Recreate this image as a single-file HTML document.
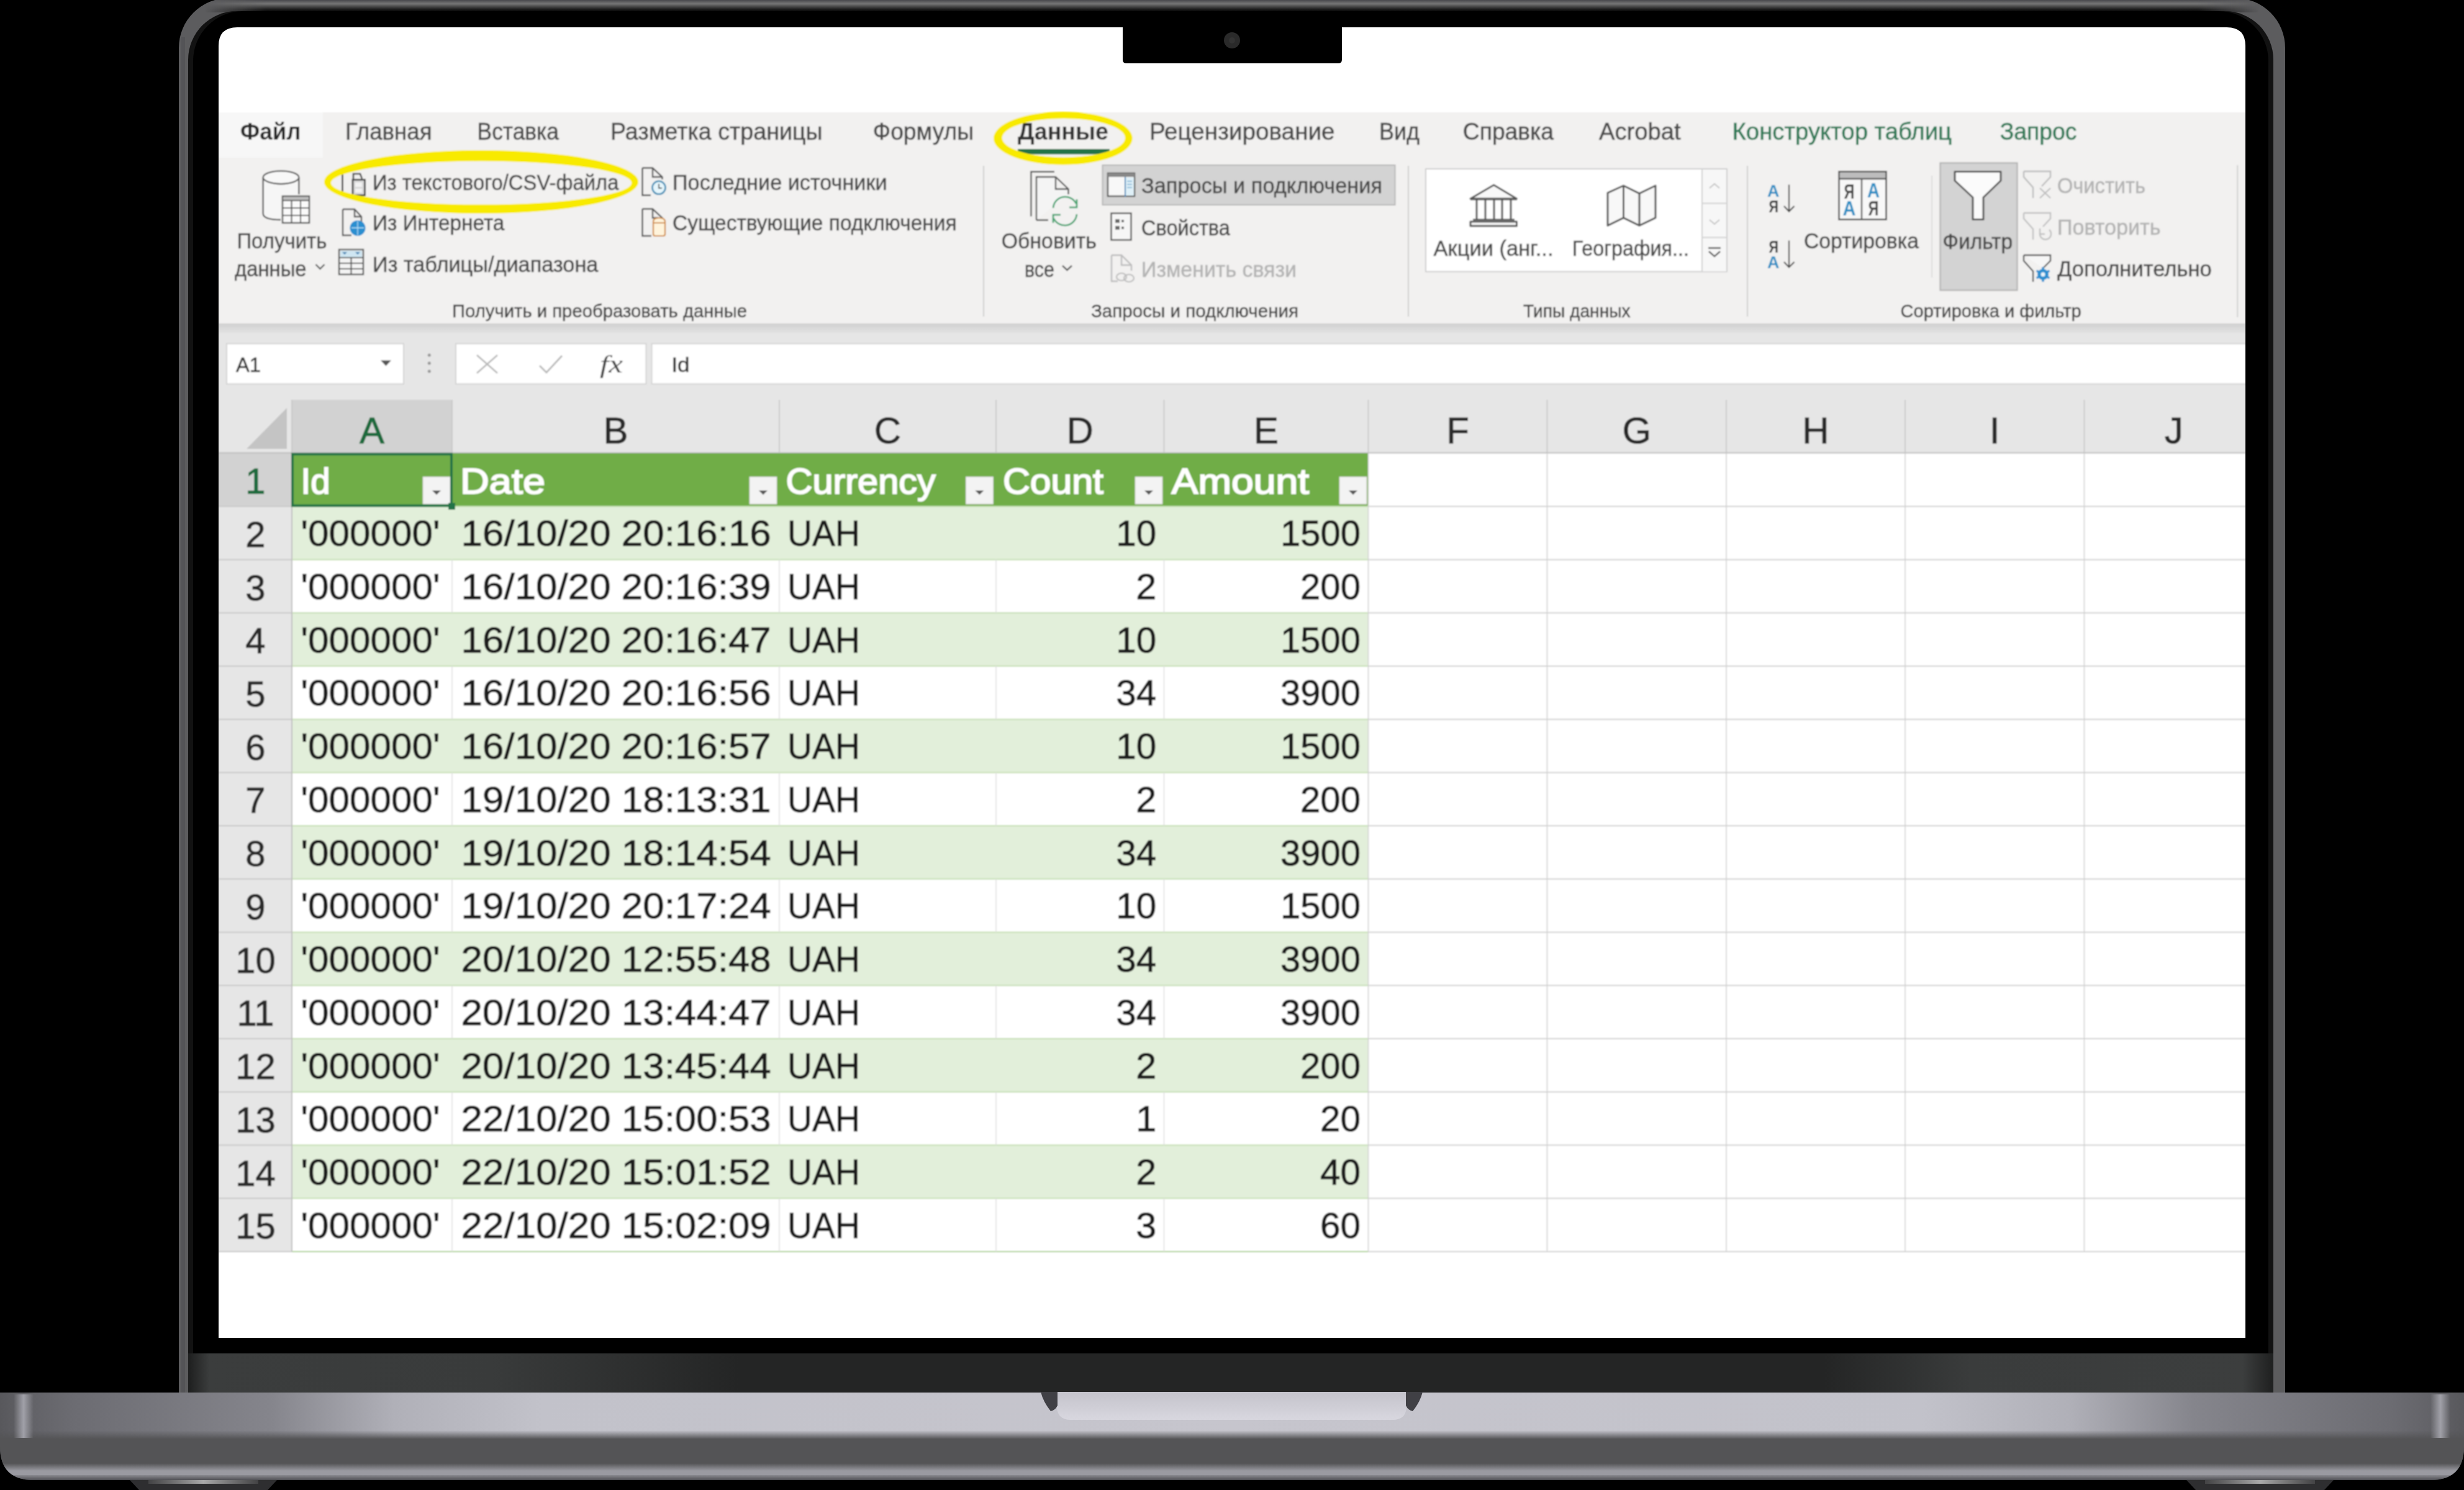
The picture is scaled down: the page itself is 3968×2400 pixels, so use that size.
<!DOCTYPE html>
<html><head><meta charset="utf-8"><title>Excel</title>
<style>
html,body{margin:0;padding:0;background:#000;width:3968px;height:2400px;overflow:hidden}
svg{display:block;font-family:"Liberation Sans", sans-serif}
</style></head><body>
<svg width="3968" height="2400" viewBox="0 0 3968 2400">
<defs>
<linearGradient id="baseH" x1="0" x2="3968" y1="0" y2="0" gradientUnits="userSpaceOnUse">
<stop offset="0" stop-color="#58585c"/><stop offset="0.012" stop-color="#626267"/><stop offset="0.03" stop-color="#6c6c72"/>
<stop offset="0.11" stop-color="#85858c"/><stop offset="0.16" stop-color="#b0b0b8"/><stop offset="0.22" stop-color="#c2c2ca"/>
<stop offset="0.5" stop-color="#c6c5cd"/>
<stop offset="0.78" stop-color="#c2c2ca"/><stop offset="0.84" stop-color="#b0b0b8"/><stop offset="0.89" stop-color="#85858c"/>
<stop offset="0.97" stop-color="#6c6c72"/><stop offset="0.988" stop-color="#626267"/><stop offset="1" stop-color="#58585c"/>
</linearGradient>
<linearGradient id="bandTop" x1="0" x2="0" y1="0" y2="1"><stop offset="0" stop-color="#545456" stop-opacity="0"/><stop offset="1" stop-color="#545456"/></linearGradient>
<linearGradient id="bandMid" x1="0" x2="0" y1="0" y2="1"><stop offset="0" stop-color="#545456"/><stop offset="1" stop-color="#9a9aa1"/></linearGradient>
<linearGradient id="bandBot" x1="0" x2="0" y1="0" y2="1"><stop offset="0" stop-color="#8a8a90"/><stop offset="1" stop-color="#505055"/></linearGradient>
<linearGradient id="hl" x1="0" x2="1" y1="0" y2="0"><stop offset="0" stop-color="#a8a8b0" stop-opacity="0"/><stop offset="0.5" stop-color="#a8a8b0" stop-opacity="0.9"/><stop offset="1" stop-color="#a8a8b0" stop-opacity="0"/></linearGradient>
<linearGradient id="footHL" x1="0" x2="1" y1="0" y2="0"><stop offset="0" stop-color="#999" stop-opacity="0.2"/><stop offset="0.5" stop-color="#aaa"/><stop offset="1" stop-color="#999" stop-opacity="0.2"/></linearGradient>
<linearGradient id="hinge" x1="0" x2="3968" y1="0" y2="0" gradientUnits="userSpaceOnUse">
<stop offset="0.077" stop-color="#202121"/><stop offset="0.085" stop-color="#3b3d3d"/><stop offset="0.2" stop-color="#393b3b"/><stop offset="0.3" stop-color="#242525"/><stop offset="0.74" stop-color="#242525"/>
<stop offset="0.8" stop-color="#3a3c3c"/><stop offset="0.91" stop-color="#3c3e3e"/><stop offset="0.922" stop-color="#202121"/>
</linearGradient>
<linearGradient id="lidG" x1="0" x2="0" y1="0" y2="20" gradientUnits="userSpaceOnUse"><stop offset="0" stop-color="#48484c"/><stop offset="0.3" stop-color="#767676"/><stop offset="0.6" stop-color="#3a3a3a"/><stop offset="0.8" stop-color="#151515"/><stop offset="1" stop-color="#000"/></linearGradient>
<linearGradient id="lidTop" x1="0" x2="0" y1="0" y2="1">
<stop offset="0" stop-color="#444"/><stop offset="0.004" stop-color="#707072"/><stop offset="0.008" stop-color="#2a2a2a"/><stop offset="1" stop-color="#2a2a2a"/>
</linearGradient>
<linearGradient id="notchG" x1="0" x2="0" y1="0" y2="1">
<stop offset="0" stop-color="#c4c3cb"/><stop offset="1" stop-color="#d8d7df"/>
</linearGradient>
<linearGradient id="shadowR" x1="0" x2="0" y1="0" y2="1">
<stop offset="0" stop-color="#d0d0d0"/><stop offset="1" stop-color="#e6e6e6"/>
</linearGradient>
</defs>
<rect x="0.0" y="0.0" width="3968.0" height="2400.0" fill="#000" />
<path d="M288 2250 L288 77 A80 80 0 0 1 368 -3 L3600 -3 A80 80 0 0 1 3680 77 L3680 2250 Z" fill="#5c5c5e" />
<clipPath id="lidClip"><path d="M288 2250 L288 77 A80 80 0 0 1 368 -3 L3600 -3 A80 80 0 0 1 3680 77 L3680 2250 Z"/></clipPath>
<linearGradient id="fadeH" x1="330" x2="3638" y1="0" y2="0" gradientUnits="userSpaceOnUse"><stop offset="0" stop-color="#fff" stop-opacity="0"/><stop offset="0.03" stop-color="#fff" stop-opacity="1"/><stop offset="0.97" stop-color="#fff" stop-opacity="1"/><stop offset="1" stop-color="#fff" stop-opacity="0"/></linearGradient>
<mask id="fadeMask" maskUnits="userSpaceOnUse" x="0" y="-10" width="3968" height="40"><rect x="330" y="-10" width="3308" height="40" fill="url(#fadeH)"/></mask>
<rect x="288" y="-3" width="3392" height="23" fill="url(#lidG)" clip-path="url(#lidClip)" mask="url(#fadeMask)"/>
<rect x="292" y="60" width="6" height="2190" fill="#4e4e54" opacity="0.6"/>
<path d="M303 2250 L303 96 A78 78 0 0 1 381 18 L3583 18 A78 78 0 0 1 3661 96 L3661 2250 Z" fill="#121212" />
<path d="M311 2250 L311 98 A80 80 0 0 1 391 18 L3573 18 A80 80 0 0 1 3653 98 L3653 2250 Z" fill="#000" />
<rect x="303.0" y="2180.0" width="3358.0" height="63.0" fill="url(#hinge)" />
<path d="M352 2155 L352 74 Q352 44 382 44 L3586 44 Q3616 44 3616 74 L3616 2155 Z" fill="#ffffff"/>
<path d="M0 2243 L3968 2243 L3968 2330 Q3968 2384 3914 2384 L54 2384 Q0 2384 0 2330 Z" fill="url(#baseH)"/>
<clipPath id="baseClip"><path d="M0 2243 L3968 2243 L3968 2330 Q3968 2384 3914 2384 L54 2384 Q0 2384 0 2330 Z"/></clipPath>
<g clip-path="url(#baseClip)">
<rect x="0" y="2304" width="3968" height="14" fill="url(#bandTop)"/>
<rect x="0.0" y="2318.0" width="3968.0" height="40.0" fill="#545456" />
<rect x="0" y="2357" width="3968" height="12" fill="url(#bandMid)"/>
<rect x="0.0" y="2369.0" width="3968.0" height="7.0" fill="#9a9aa1" />
<rect x="0" y="2376" width="3968" height="8" fill="url(#bandBot)"/>
<rect x="22" y="2246" width="32" height="70" fill="url(#hl)"/>
<rect x="3914" y="2246" width="32" height="70" fill="url(#hl)"/>
</g>
<path d="M1702 2242 L2265 2242 L2265 2268 Q2263 2287 2243 2287 L1724 2287 Q1704 2287 1702 2268 Z" fill="url(#notchG)"/>
<path d="M1676 2242 L1703 2242 L1703 2264 Q1699 2272 1692 2273 Q1680 2258 1676 2242 Z" fill="#404045"/>
<path d="M2291 2242 L2264 2242 L2264 2264 Q2268 2272 2275 2273 Q2287 2258 2291 2242 Z" fill="#404045"/>
<path d="M209 2384 L446 2384 L431 2400 L224 2400 Z" fill="#2e2e30"/>
<rect x="239" y="2384" width="177" height="6" fill="url(#footHL)"/>
<path d="M3521 2384 L3758 2384 L3743 2400 L3536 2400 Z" fill="#2e2e30"/>
<rect x="3551" y="2384" width="177" height="6" fill="url(#footHL)"/>
<clipPath id="scr"><path d="M352 2155 L352 74 Q352 44 382 44 L3586 44 Q3616 44 3616 74 L3616 2155 Z"/></clipPath>
<filter id="soft" x="0" y="0" width="1" height="1" filterUnits="objectBoundingBox"><feGaussianBlur stdDeviation="0.9"/></filter>
<g clip-path="url(#scr)"><g filter="url(#soft)">
<rect x="352.0" y="181.0" width="3264.0" height="341.0" fill="#f2f1f0" />
<rect x="352.0" y="181.0" width="168.0" height="73.0" fill="#f7f7f7" />
<rect x="352" y="521" width="3264" height="18" fill="url(#shadowR)"/>
<rect x="352.0" y="537.0" width="3264.0" height="193.0" fill="#e6e6e6" />
<text x="387.0" y="225.0" font-size="38" fill="#262626" font-weight="bold" textLength="97.5" lengthAdjust="spacingAndGlyphs" >Файл</text>
<text x="556.0" y="225.0" font-size="38" fill="#4a4a4a" textLength="139.5" lengthAdjust="spacingAndGlyphs" stroke="#4a4a4a" stroke-width="0.61" >Главная</text>
<text x="768.6" y="225.0" font-size="38" fill="#4a4a4a" textLength="131.4" lengthAdjust="spacingAndGlyphs" stroke="#4a4a4a" stroke-width="0.61" >Вставка</text>
<text x="983.0" y="225.0" font-size="38" fill="#4a4a4a" textLength="341.7" lengthAdjust="spacingAndGlyphs" stroke="#4a4a4a" stroke-width="0.61" >Разметка страницы</text>
<text x="1405.8" y="225.0" font-size="38" fill="#4a4a4a" textLength="162.2" lengthAdjust="spacingAndGlyphs" stroke="#4a4a4a" stroke-width="0.61" >Формулы</text>
<text x="1639.0" y="225.0" font-size="38" fill="#333" font-weight="bold" textLength="146.0" lengthAdjust="spacingAndGlyphs" >Данные</text>
<text x="1851.0" y="225.0" font-size="38" fill="#4a4a4a" textLength="298.6" lengthAdjust="spacingAndGlyphs" stroke="#4a4a4a" stroke-width="0.61" >Рецензирование</text>
<text x="2221.0" y="225.0" font-size="38" fill="#4a4a4a" textLength="65.0" lengthAdjust="spacingAndGlyphs" stroke="#4a4a4a" stroke-width="0.61" >Вид</text>
<text x="2355.8" y="225.0" font-size="38" fill="#4a4a4a" textLength="146.2" lengthAdjust="spacingAndGlyphs" stroke="#4a4a4a" stroke-width="0.61" >Справка</text>
<text x="2575.0" y="225.0" font-size="38" fill="#4a4a4a" textLength="131.7" lengthAdjust="spacingAndGlyphs" stroke="#4a4a4a" stroke-width="0.61" >Acrobat</text>
<text x="2789.5" y="225.0" font-size="38" fill="#2e7a57" textLength="353.5" lengthAdjust="spacingAndGlyphs" stroke="#2e7a57" stroke-width="0.61" >Конструктор таблиц</text>
<text x="3220.8" y="225.0" font-size="38" fill="#2e7a57" textLength="123.7" lengthAdjust="spacingAndGlyphs" stroke="#2e7a57" stroke-width="0.61" >Запрос</text>
<rect x="1639.0" y="240.0" width="148.0" height="8.5" fill="#217346" />
<path d="M423.7 286 L423.7 344 Q423.7 354 452 354 L452 315 L481.3 315 L481.3 286 Z" fill="#f6f6f6"/>
<g fill="none" stroke="#555" stroke-width="2.4"><path d="M423.7 286 L423.7 344 Q423.7 354 452 354"/><ellipse cx="452.5" cy="285.8" rx="28.8" ry="10.4" fill="#f8f8f8"/><path d="M481.3 286 L481.3 313"/></g>
<g stroke="#555" stroke-width="2.4" fill="#fafafa"><rect x="455" y="316" width="43" height="43"/></g>
<g stroke="#555" stroke-width="2"><rect x="455" y="316" width="43" height="7" fill="#bbb"/><line x1="469.5" y1="323" x2="469.5" y2="359"/><line x1="484" y1="323" x2="484" y2="359"/><line x1="455" y1="335" x2="498" y2="335"/><line x1="455" y1="347" x2="498" y2="347"/></g>
<text x="381.4" y="400.3" font-size="35" fill="#4a4a4a" textLength="145.0" lengthAdjust="spacingAndGlyphs" stroke="#4a4a4a" stroke-width="0.56" >Получить</text>
<text x="378.0" y="445.3" font-size="35" fill="#4a4a4a" textLength="115.5" lengthAdjust="spacingAndGlyphs" stroke="#4a4a4a" stroke-width="0.56" >данные</text>
<path d="M508.5 426 L515.5 433 L522.5 426" fill="none" stroke="#555" stroke-width="2.4"/>
<path d="M555 271 L551.5 271 L551.5 312 L556 312" fill="none" stroke="#444" stroke-width="2.6"/>
<rect x="568" y="289.5" width="19.5" height="25" fill="#d9d9d9" stroke="#444" stroke-width="2.8"/>
<path d="M569 288 L569 280 L580 280 L583 288" fill="none" stroke="#444" stroke-width="2.6"/>
<g fill="#f2f2f2"><rect x="572" y="294" width="11" height="7"/><rect x="572" y="304" width="11" height="6"/></g>
<text x="600.0" y="305.6" font-size="35" fill="#4a4a4a" textLength="396.5" lengthAdjust="spacingAndGlyphs" stroke="#4a4a4a" stroke-width="0.56" >Из текстового/CSV-файла</text>
<path d="M552 337 L571 337 L582 349 L582 358 M552 337 L552 379 L566 379" fill="none" stroke="#555" stroke-width="2.4"/>
<path d="M571 337 L571 349 L582 349" fill="none" stroke="#555" stroke-width="2.4"/>
<circle cx="576" cy="367.4" r="12.5" fill="#2c8fd0"/>
<path d="M576 356 L576 379 M566 367 L586 367" stroke="#bfe3f7" stroke-width="1.3"/>
<text x="600.0" y="371.0" font-size="35" fill="#4a4a4a" textLength="212.4" lengthAdjust="spacingAndGlyphs" stroke="#4a4a4a" stroke-width="0.56" >Из Интернета</text>
<g fill="#f4f4f4" stroke="#555" stroke-width="2.4"><rect x="546" y="402" width="39" height="40"/></g>
<rect x="548" y="404" width="35" height="10" fill="#cfe6f2"/>
<g stroke="#555" stroke-width="2"><line x1="546" y1="415" x2="585" y2="415"/><line x1="546" y1="424" x2="585" y2="424"/><line x1="546" y1="433" x2="585" y2="433"/><line x1="565.5" y1="415" x2="565.5" y2="442"/></g>
<path d="M551 406 L555 410 L559 406 Z M572 406 L576 410 L580 406 Z" fill="#3a7fb0"/>
<text x="600.0" y="437.6" font-size="35" fill="#4a4a4a" textLength="363.4" lengthAdjust="spacingAndGlyphs" stroke="#4a4a4a" stroke-width="0.56" >Из таблицы/диапазона</text>
<path d="M1034.5 270.5 L1051 270.5 L1066.5 285 L1066.5 289 M1034.5 270.5 L1034.5 314.5 L1048 314.5 M1051 270.5 L1051 285 L1066.5 285" fill="none" stroke="#555" stroke-width="2.4"/>
<circle cx="1061" cy="302.3" r="10.5" fill="#e6f6fc" stroke="#3c8db5" stroke-width="2.6"/>
<path d="M1061 296 L1061 303 L1066 303" fill="none" stroke="#444" stroke-width="1.8"/>
<text x="1083.0" y="306.0" font-size="35" fill="#4a4a4a" textLength="345.6" lengthAdjust="spacingAndGlyphs" stroke="#4a4a4a" stroke-width="0.56" >Последние источники</text>
<path d="M1034.5 336.5 L1051 336.5 L1066.5 351 L1066.5 352 M1034.5 336.5 L1034.5 380 L1049 380 M1051 336.5 L1051 351 L1060 351" fill="none" stroke="#555" stroke-width="2.4"/>
<path d="M1052 357 Q1052 351 1061.5 351 Q1071 351 1071 357 L1071 377 Q1071 380 1068 380 L1055 380 Q1052 380 1052 377 Z" fill="#fff4dc" stroke="#d08a3c" stroke-width="2.2"/>
<line x1="1052" y1="359" x2="1071" y2="359" stroke="#d08a3c" stroke-width="2"/>
<text x="1083.0" y="371.0" font-size="35" fill="#4a4a4a" textLength="457.6" lengthAdjust="spacingAndGlyphs" stroke="#4a4a4a" stroke-width="0.56" >Существующие подключения</text>
<text x="728.0" y="511.0" font-size="30" fill="#444" textLength="475.0" lengthAdjust="spacingAndGlyphs" stroke="#444" stroke-width="0.48" >Получить и преобразовать данные</text>
<rect x="1583.2" y="267.0" width="1.6" height="243.0" fill="#c8c8c8" />
<rect x="2267.2" y="267.0" width="1.6" height="243.0" fill="#c8c8c8" />
<rect x="2813.2" y="267.0" width="1.6" height="243.0" fill="#c8c8c8" />
<rect x="3110.5" y="283.0" width="1.4" height="164.0" fill="#d4d4d4" />
<rect x="3602.5" y="266.0" width="1.6" height="245.0" fill="#c8c8c8" />
<path d="M1660.4 348.6 L1660.4 276.8 L1698 276.8" fill="none" stroke="#555" stroke-width="2.4"/>
<path d="M1669 354.5 L1669 285 L1700 285 L1720.5 304.5 L1720.5 313 M1700 285 L1700 304.5 L1720.5 304.5 M1669 354.5 L1688 354.5" fill="#f4f4f4" stroke="#555" stroke-width="2.4"/>
<g fill="none" stroke="#3aa06a" stroke-width="2.6"><path d="M1696 335 A19.5 19.5 0 0 1 1733 328"/><path d="M1734 345 A19.5 19.5 0 0 1 1697 352"/></g>
<path d="M1734 321 L1734 334 L1722 334 M1696 359 L1696 346 L1708 346" fill="none" stroke="#3aa06a" stroke-width="2.6"/>
<text x="1612.8" y="400.3" font-size="35" fill="#4a4a4a" textLength="153.0" lengthAdjust="spacingAndGlyphs" stroke="#4a4a4a" stroke-width="0.56" >Обновить</text>
<text x="1650.0" y="446.0" font-size="35" fill="#4a4a4a" textLength="48.0" lengthAdjust="spacingAndGlyphs" stroke="#4a4a4a" stroke-width="0.56" >все</text>
<path d="M1711 428 L1718.5 435 L1726 428" fill="none" stroke="#555" stroke-width="2.4"/>
<rect x="1775.5" y="266" width="471" height="64" fill="#d3d3d3" stroke="#b8b8b8" stroke-width="2"/>
<rect x="1784" y="279" width="43" height="37" fill="#f8f8f8" stroke="#555" stroke-width="2.4"/>
<rect x="1784" y="279" width="43" height="6" fill="#888"/>
<rect x="1812" y="286" width="14" height="29" fill="#dff0f8"/>
<line x1="1812" y1="285" x2="1812" y2="317" stroke="#3a86b8" stroke-width="2"/>
<g stroke="#6aa6cc" stroke-width="1.4"><line x1="1815" y1="292" x2="1823" y2="292"/><line x1="1815" y1="297" x2="1823" y2="297"/><line x1="1815" y1="302" x2="1823" y2="302"/></g>
<text x="1838.0" y="311.0" font-size="35" fill="#4a4a4a" textLength="388.0" lengthAdjust="spacingAndGlyphs" stroke="#4a4a4a" stroke-width="0.56" >Запросы и подключения</text>
<rect x="1789.5" y="343.5" width="32" height="43" fill="#f6f6f6" stroke="#555" stroke-width="2.4"/>
<g fill="#666"><rect x="1796" y="353" width="7" height="6"/><rect x="1796" y="364" width="7" height="6"/><rect x="1806" y="354" width="4" height="4"/><rect x="1806" y="365" width="4" height="4"/></g>
<text x="1838.0" y="379.0" font-size="35" fill="#4a4a4a" textLength="142.8" lengthAdjust="spacingAndGlyphs" stroke="#4a4a4a" stroke-width="0.56" >Свойства</text>
<path d="M1790 411 L1806 411 L1822 427 L1822 436 M1790 411 L1790 453 L1800 453 M1806 411 L1806 427 L1822 427" fill="none" stroke="#bdbdbd" stroke-width="2.4"/>
<g fill="none" stroke="#bdbdbd" stroke-width="2.2"><ellipse cx="1806" cy="446" rx="8" ry="6"/><ellipse cx="1818" cy="448" rx="8" ry="6"/></g>
<text x="1838.0" y="446.0" font-size="35" fill="#b4b4b4" textLength="250.0" lengthAdjust="spacingAndGlyphs" stroke="#b4b4b4" stroke-width="0.56" >Изменить связи</text>
<text x="1757.0" y="511.0" font-size="30" fill="#444" textLength="334.0" lengthAdjust="spacingAndGlyphs" stroke="#444" stroke-width="0.48" >Запросы и подключения</text>
<rect x="2296" y="272" width="485" height="165.5" fill="#ffffff" stroke="#cfcfcf" stroke-width="2"/>
<rect x="2741" y="273" width="39" height="164" fill="#f7f7f7"/>
<g stroke="#d2d2d2" stroke-width="2"><line x1="2741" y1="272" x2="2741" y2="437"/><line x1="2741" y1="327.5" x2="2781" y2="327.5"/><line x1="2741" y1="382.4" x2="2781" y2="382.4"/></g>
<path d="M2753 303 L2761 296 L2769 303" fill="none" stroke="#c4c4c4" stroke-width="2"/>
<path d="M2753 354 L2761 361 L2769 354" fill="none" stroke="#c4c4c4" stroke-width="2"/>
<path d="M2751 399.5 L2771 399.5 M2752 405 L2761 413 L2770 405" fill="none" stroke="#555" stroke-width="2.4"/>
<g fill="#f8f8f8" stroke="#555" stroke-width="3" stroke-linejoin="round"><path d="M2368 320 L2405.6 298 L2442.5 320 Z"/><rect x="2368" y="357" width="74.5" height="7"/></g>
<g stroke="#555" stroke-width="3" fill="none"><line x1="2368" y1="321" x2="2443" y2="321"/><line x1="2372" y1="354" x2="2439" y2="354"/><line x1="2378" y1="321" x2="2378" y2="354"/><line x1="2392" y1="321" x2="2392" y2="354"/><line x1="2406" y1="321" x2="2406" y2="354"/><line x1="2419" y1="321" x2="2419" y2="354"/><line x1="2433" y1="321" x2="2433" y2="354"/></g>
<text x="2308.5" y="412.0" font-size="35" fill="#4a4a4a" textLength="193.0" lengthAdjust="spacingAndGlyphs" stroke="#4a4a4a" stroke-width="0.56" >Акции (анг...</text>
<path d="M2589 310.7 L2614.5 299 L2640 311.7 L2666 299 L2666 350.8 L2640 363.4 L2614.5 350.8 L2589 363.4 Z" fill="#f8f8f8" stroke="#555" stroke-width="3" stroke-linejoin="round"/>
<path d="M2614.5 299 L2614.5 350.8 M2640 311.7 L2640 363.4" stroke="#555" stroke-width="3"/>
<text x="2532.0" y="412.0" font-size="35" fill="#4a4a4a" textLength="188.0" lengthAdjust="spacingAndGlyphs" stroke="#4a4a4a" stroke-width="0.56" >География...</text>
<text x="2453.0" y="511.0" font-size="30" fill="#444" textLength="172.5" lengthAdjust="spacingAndGlyphs" stroke="#444" stroke-width="0.48" >Типы данных</text>
<text x="2846.0" y="316.5" font-size="28" fill="#2b8fc4" font-weight="bold" textLength="19.5" lengthAdjust="spacingAndGlyphs" >А</text>
<text x="2848.5" y="342.0" font-size="28" fill="#333" font-weight="bold" textLength="15.5" lengthAdjust="spacingAndGlyphs" >Я</text>
<path d="M2881 297.6 L2881 340 M2873 332 L2881 340.6 L2889.5 332" fill="none" stroke="#444" stroke-width="2.2"/>
<text x="2848.5" y="406.5" font-size="28" fill="#333" font-weight="bold" textLength="15.5" lengthAdjust="spacingAndGlyphs" >Я</text>
<text x="2846.0" y="432.0" font-size="28" fill="#2b8fc4" font-weight="bold" textLength="19.5" lengthAdjust="spacingAndGlyphs" >А</text>
<path d="M2881 387.5 L2881 430 M2873 422 L2881 430.5 L2889.5 422" fill="none" stroke="#444" stroke-width="2.2"/>
<rect x="2961.5" y="276.5" width="76" height="77" fill="#f8f8f8" stroke="#555" stroke-width="2.6"/>
<rect x="2963" y="278" width="73" height="9" fill="#bdbdbd"/>
<line x1="2961.5" y1="288" x2="3037.5" y2="288" stroke="#555" stroke-width="2.4"/>
<line x1="2998" y1="288" x2="2998" y2="353" stroke="#555" stroke-width="2.4"/>
<text x="2969.5" y="319.5" font-size="33" fill="#444" font-weight="bold" textLength="17.0" lengthAdjust="spacingAndGlyphs" >Я</text>
<text x="2967.5" y="346.5" font-size="33" fill="#2b8fc4" font-weight="bold" textLength="21.0" lengthAdjust="spacingAndGlyphs" >А</text>
<text x="3007.0" y="318.0" font-size="33" fill="#2b8fc4" font-weight="bold" textLength="20.0" lengthAdjust="spacingAndGlyphs" >А</text>
<text x="3008.5" y="346.5" font-size="33" fill="#444" font-weight="bold" textLength="17.0" lengthAdjust="spacingAndGlyphs" >Я</text>
<text x="2905.0" y="400.3" font-size="35" fill="#4a4a4a" textLength="185.0" lengthAdjust="spacingAndGlyphs" stroke="#4a4a4a" stroke-width="0.56" >Сортировка</text>
<rect x="3124.5" y="262.5" width="124" height="205" fill="#d3d3d3" stroke="#b4b4b4" stroke-width="2.2"/>
<path d="M3148 276.5 L3222 276.5 L3222 291 L3194 318 L3194 353.5 L3177 353.5 L3177 318 L3148 291 Z" fill="#fbfbfb" stroke="#555" stroke-width="3" stroke-linejoin="round"/>
<text x="3128.5" y="400.5" font-size="35" fill="#4a4a4a" textLength="112.5" lengthAdjust="spacingAndGlyphs" stroke="#4a4a4a" stroke-width="0.56" >Фильтр</text>
<path d="M3259 276 L3302 276 L3302 285 L3288 300 M3259 276 L3259 285 L3274 302 L3274 319" fill="none" stroke="#bdbdbd" stroke-width="2.4"/>
<path d="M3285 303 L3302 319 M3302 303 L3285 319" stroke="#bdbdbd" stroke-width="2.2"/>
<text x="3313.0" y="311.0" font-size="35" fill="#b4b4b4" textLength="142.0" lengthAdjust="spacingAndGlyphs" stroke="#b4b4b4" stroke-width="0.56" >Очистить</text>
<path d="M3259 343 L3302 343 L3302 352 L3290 365 M3259 343 L3259 352 L3274 369 L3274 386" fill="none" stroke="#c2c2c2" stroke-width="2.4"/>
<path d="M3300 370 A9 9 0 1 1 3285 377 M3285 368 L3285 377 L3293 377" fill="none" stroke="#c2c2c2" stroke-width="2.4"/>
<text x="3313.0" y="378.0" font-size="35" fill="#b4b4b4" textLength="166.5" lengthAdjust="spacingAndGlyphs" stroke="#b4b4b4" stroke-width="0.56" >Повторить</text>
<path d="M3259 411 L3302 411 L3302 420 L3290 432 M3259 411 L3259 420 L3274 437 L3274 454" fill="#f6f6f6" stroke="#555" stroke-width="2.4"/>
<circle cx="3290" cy="442" r="9" fill="#2b8fd0"/><circle cx="3290" cy="442" r="3.5" fill="#e8f4fb"/>
<g stroke="#2b8fd0" stroke-width="3.5"><line x1="3290" y1="430" x2="3290" y2="454"/><line x1="3279.6" y1="436" x2="3300.4" y2="448"/><line x1="3279.6" y1="448" x2="3300.4" y2="436"/></g>
<circle cx="3290" cy="442" r="3.5" fill="#e8f4fb"/>
<text x="3313.0" y="445.4" font-size="35" fill="#4a4a4a" textLength="248.7" lengthAdjust="spacingAndGlyphs" stroke="#4a4a4a" stroke-width="0.56" >Дополнительно</text>
<text x="3060.6" y="511.0" font-size="30" fill="#444" textLength="291.0" lengthAdjust="spacingAndGlyphs" stroke="#444" stroke-width="0.48" >Сортировка и фильтр</text>
<path d="M522 293 A253 51 0 1 0 1028 293 A253 51 0 1 0 522 293 Z M533 294.6 A242 35 0 1 0 1017 294.6 A242 35 0 1 0 533 294.6 Z" fill="#f8ea00" fill-rule="evenodd"/>
<path d="M1600.0 222.75 A111.85 42.75 0 1 0 1823.6999999999998 222.75 A111.85 42.75 0 1 0 1600.0 222.75 Z M1613.9 222.2 A99 31.2 0 1 0 1811.9 222.2 A99 31.2 0 1 0 1613.9 222.2 Z" fill="#f8ea00" fill-rule="evenodd"/>
<rect x="365" y="553.5" width="285" height="65" fill="#fff" stroke="#d4d4d4" stroke-width="2"/>
<text x="380.0" y="599.3" font-size="33" fill="#333" textLength="40.0" lengthAdjust="spacingAndGlyphs" stroke="#333" stroke-width="0.53" >A1</text>
<path d="M613 580.5 L630 580.5 L621.5 589.5 Z" fill="#555"/>
<g fill="#9a9a9a"><circle cx="691.3" cy="572" r="2.6"/><circle cx="691.3" cy="585" r="2.6"/><circle cx="691.3" cy="598" r="2.6"/></g>
<rect x="734" y="553.5" width="306.5" height="65" fill="#fff" stroke="#d4d4d4" stroke-width="2"/>
<path d="M768 572 L801 601 M801 572 L768 601" stroke="#b9b9b9" stroke-width="2.6"/>
<path d="M869 589 L880 600 L905 573" fill="none" stroke="#b9b9b9" stroke-width="2.8"/>
<text x="966" y="600" font-family="Liberation Serif, serif" font-style="italic" font-size="40" fill="#444" textLength="37" lengthAdjust="spacingAndGlyphs">fx</text>
<rect x="1049.5" y="553.5" width="2580" height="65" fill="#fff" stroke="#d4d4d4" stroke-width="2"/>
<text x="1081.4" y="599.0" font-size="33" fill="#333" textLength="29.2" lengthAdjust="spacingAndGlyphs" stroke="#333" stroke-width="0.53" >Id</text>
<rect x="352.0" y="730.0" width="3264.0" height="1425.0" fill="#ffffff" />
<rect x="352.0" y="730.0" width="118.0" height="1286.0" fill="#e6e6e6" />
<rect x="352.0" y="730.0" width="118.0" height="85.7" fill="#d2d2d2" />
<rect x="470.0" y="644.0" width="258.0" height="86.0" fill="#d2d2d2" />
<path d="M462 657 L462 723 L397 723 Z" fill="#c4c4c4"/>
<rect x="727.2" y="644.0" width="1.6" height="86.0" fill="#c6c6c6" />
<rect x="1254.2" y="644.0" width="1.6" height="86.0" fill="#c6c6c6" />
<rect x="1603.2" y="644.0" width="1.6" height="86.0" fill="#c6c6c6" />
<rect x="1873.7" y="644.0" width="1.6" height="86.0" fill="#c6c6c6" />
<rect x="2202.7" y="644.0" width="1.6" height="86.0" fill="#c6c6c6" />
<rect x="2490.7" y="644.0" width="1.6" height="86.0" fill="#c6c6c6" />
<rect x="2779.2" y="644.0" width="1.6" height="86.0" fill="#c6c6c6" />
<rect x="3067.2" y="644.0" width="1.6" height="86.0" fill="#c6c6c6" />
<rect x="3355.7" y="644.0" width="1.6" height="86.0" fill="#c6c6c6" />
<rect x="469.0" y="644.0" width="1.6" height="86.0" fill="#c6c6c6" />
<rect x="352.0" y="728.5" width="3264.0" height="2.0" fill="#bdbdbd" />
<text x="599.0" y="713.7" font-size="60" fill="#1d6b3c" text-anchor="middle" stroke="#1d6b3c" stroke-width="0.96" >A</text>
<text x="991.5" y="713.7" font-size="60" fill="#2a2a2a" text-anchor="middle" stroke="#2a2a2a" stroke-width="0.96" >B</text>
<text x="1429.5" y="713.7" font-size="60" fill="#2a2a2a" text-anchor="middle" stroke="#2a2a2a" stroke-width="0.96" >C</text>
<text x="1739.2" y="713.7" font-size="60" fill="#2a2a2a" text-anchor="middle" stroke="#2a2a2a" stroke-width="0.96" >D</text>
<text x="2039.0" y="713.7" font-size="60" fill="#2a2a2a" text-anchor="middle" stroke="#2a2a2a" stroke-width="0.96" >E</text>
<text x="2347.5" y="713.7" font-size="60" fill="#2a2a2a" text-anchor="middle" stroke="#2a2a2a" stroke-width="0.96" >F</text>
<text x="2635.8" y="713.7" font-size="60" fill="#2a2a2a" text-anchor="middle" stroke="#2a2a2a" stroke-width="0.96" >G</text>
<text x="2924.0" y="713.7" font-size="60" fill="#2a2a2a" text-anchor="middle" stroke="#2a2a2a" stroke-width="0.96" >H</text>
<text x="3212.2" y="713.7" font-size="60" fill="#2a2a2a" text-anchor="middle" stroke="#2a2a2a" stroke-width="0.96" >I</text>
<text x="3500.8" y="713.7" font-size="60" fill="#2a2a2a" text-anchor="middle" stroke="#2a2a2a" stroke-width="0.96" >J</text>
<rect x="470.0" y="730.0" width="1733.5" height="85.7" fill="#70ad47" />
<rect x="470.0" y="815.7" width="1733.5" height="85.7" fill="#e2efda" />
<rect x="470.0" y="987.2" width="1733.5" height="85.7" fill="#e2efda" />
<rect x="470.0" y="1158.7" width="1733.5" height="85.7" fill="#e2efda" />
<rect x="470.0" y="1330.1" width="1733.5" height="85.7" fill="#e2efda" />
<rect x="470.0" y="1501.6" width="1733.5" height="85.7" fill="#e2efda" />
<rect x="470.0" y="1673.0" width="1733.5" height="85.7" fill="#e2efda" />
<rect x="470.0" y="1844.5" width="1733.5" height="85.7" fill="#e2efda" />
<rect x="352.0" y="814.7" width="118.0" height="2.0" fill="#c9c9c9" />
<rect x="470.0" y="814.7" width="1733.5" height="2.0" fill="#c5dfb4" />
<rect x="2203.5" y="814.7" width="1412.5" height="2.0" fill="#d2d2d2" />
<rect x="352.0" y="900.5" width="118.0" height="2.0" fill="#c9c9c9" />
<rect x="470.0" y="900.5" width="1733.5" height="2.0" fill="#c5dfb4" />
<rect x="2203.5" y="900.5" width="1412.5" height="2.0" fill="#d2d2d2" />
<rect x="352.0" y="986.2" width="118.0" height="2.0" fill="#c9c9c9" />
<rect x="470.0" y="986.2" width="1733.5" height="2.0" fill="#c5dfb4" />
<rect x="2203.5" y="986.2" width="1412.5" height="2.0" fill="#d2d2d2" />
<rect x="352.0" y="1071.9" width="118.0" height="2.0" fill="#c9c9c9" />
<rect x="470.0" y="1071.9" width="1733.5" height="2.0" fill="#c5dfb4" />
<rect x="2203.5" y="1071.9" width="1412.5" height="2.0" fill="#d2d2d2" />
<rect x="352.0" y="1157.7" width="118.0" height="2.0" fill="#c9c9c9" />
<rect x="470.0" y="1157.7" width="1733.5" height="2.0" fill="#c5dfb4" />
<rect x="2203.5" y="1157.7" width="1412.5" height="2.0" fill="#d2d2d2" />
<rect x="352.0" y="1243.4" width="118.0" height="2.0" fill="#c9c9c9" />
<rect x="470.0" y="1243.4" width="1733.5" height="2.0" fill="#c5dfb4" />
<rect x="2203.5" y="1243.4" width="1412.5" height="2.0" fill="#d2d2d2" />
<rect x="352.0" y="1329.1" width="118.0" height="2.0" fill="#c9c9c9" />
<rect x="470.0" y="1329.1" width="1733.5" height="2.0" fill="#c5dfb4" />
<rect x="2203.5" y="1329.1" width="1412.5" height="2.0" fill="#d2d2d2" />
<rect x="352.0" y="1414.8" width="118.0" height="2.0" fill="#c9c9c9" />
<rect x="470.0" y="1414.8" width="1733.5" height="2.0" fill="#c5dfb4" />
<rect x="2203.5" y="1414.8" width="1412.5" height="2.0" fill="#d2d2d2" />
<rect x="352.0" y="1500.6" width="118.0" height="2.0" fill="#c9c9c9" />
<rect x="470.0" y="1500.6" width="1733.5" height="2.0" fill="#c5dfb4" />
<rect x="2203.5" y="1500.6" width="1412.5" height="2.0" fill="#d2d2d2" />
<rect x="352.0" y="1586.3" width="118.0" height="2.0" fill="#c9c9c9" />
<rect x="470.0" y="1586.3" width="1733.5" height="2.0" fill="#c5dfb4" />
<rect x="2203.5" y="1586.3" width="1412.5" height="2.0" fill="#d2d2d2" />
<rect x="352.0" y="1672.0" width="118.0" height="2.0" fill="#c9c9c9" />
<rect x="470.0" y="1672.0" width="1733.5" height="2.0" fill="#c5dfb4" />
<rect x="2203.5" y="1672.0" width="1412.5" height="2.0" fill="#d2d2d2" />
<rect x="352.0" y="1757.8" width="118.0" height="2.0" fill="#c9c9c9" />
<rect x="470.0" y="1757.8" width="1733.5" height="2.0" fill="#c5dfb4" />
<rect x="2203.5" y="1757.8" width="1412.5" height="2.0" fill="#d2d2d2" />
<rect x="352.0" y="1843.5" width="118.0" height="2.0" fill="#c9c9c9" />
<rect x="470.0" y="1843.5" width="1733.5" height="2.0" fill="#c5dfb4" />
<rect x="2203.5" y="1843.5" width="1412.5" height="2.0" fill="#d2d2d2" />
<rect x="352.0" y="1929.2" width="118.0" height="2.0" fill="#c9c9c9" />
<rect x="470.0" y="1929.2" width="1733.5" height="2.0" fill="#c5dfb4" />
<rect x="2203.5" y="1929.2" width="1412.5" height="2.0" fill="#d2d2d2" />
<rect x="352.0" y="2015.0" width="118.0" height="2.0" fill="#c9c9c9" />
<rect x="470.0" y="2015.0" width="1733.5" height="2.0" fill="#a9d08e" />
<rect x="2203.5" y="2015.0" width="1412.5" height="2.0" fill="#d2d2d2" />
<rect x="2202.7" y="730.0" width="1.6" height="1286.0" fill="#d2d2d2" />
<rect x="2490.7" y="730.0" width="1.6" height="1286.0" fill="#d2d2d2" />
<rect x="2779.2" y="730.0" width="1.6" height="1286.0" fill="#d2d2d2" />
<rect x="3067.2" y="730.0" width="1.6" height="1286.0" fill="#d2d2d2" />
<rect x="3355.7" y="730.0" width="1.6" height="1286.0" fill="#d2d2d2" />
<rect x="727.2" y="901.5" width="1.6" height="85.7" fill="#e0e0e0" />
<rect x="1254.2" y="901.5" width="1.6" height="85.7" fill="#e0e0e0" />
<rect x="1603.2" y="901.5" width="1.6" height="85.7" fill="#e0e0e0" />
<rect x="1873.7" y="901.5" width="1.6" height="85.7" fill="#e0e0e0" />
<rect x="727.2" y="1072.9" width="1.6" height="85.7" fill="#e0e0e0" />
<rect x="1254.2" y="1072.9" width="1.6" height="85.7" fill="#e0e0e0" />
<rect x="1603.2" y="1072.9" width="1.6" height="85.7" fill="#e0e0e0" />
<rect x="1873.7" y="1072.9" width="1.6" height="85.7" fill="#e0e0e0" />
<rect x="727.2" y="1244.4" width="1.6" height="85.7" fill="#e0e0e0" />
<rect x="1254.2" y="1244.4" width="1.6" height="85.7" fill="#e0e0e0" />
<rect x="1603.2" y="1244.4" width="1.6" height="85.7" fill="#e0e0e0" />
<rect x="1873.7" y="1244.4" width="1.6" height="85.7" fill="#e0e0e0" />
<rect x="727.2" y="1415.8" width="1.6" height="85.7" fill="#e0e0e0" />
<rect x="1254.2" y="1415.8" width="1.6" height="85.7" fill="#e0e0e0" />
<rect x="1603.2" y="1415.8" width="1.6" height="85.7" fill="#e0e0e0" />
<rect x="1873.7" y="1415.8" width="1.6" height="85.7" fill="#e0e0e0" />
<rect x="727.2" y="1587.3" width="1.6" height="85.7" fill="#e0e0e0" />
<rect x="1254.2" y="1587.3" width="1.6" height="85.7" fill="#e0e0e0" />
<rect x="1603.2" y="1587.3" width="1.6" height="85.7" fill="#e0e0e0" />
<rect x="1873.7" y="1587.3" width="1.6" height="85.7" fill="#e0e0e0" />
<rect x="727.2" y="1758.8" width="1.6" height="85.7" fill="#e0e0e0" />
<rect x="1254.2" y="1758.8" width="1.6" height="85.7" fill="#e0e0e0" />
<rect x="1603.2" y="1758.8" width="1.6" height="85.7" fill="#e0e0e0" />
<rect x="1873.7" y="1758.8" width="1.6" height="85.7" fill="#e0e0e0" />
<rect x="727.2" y="1930.2" width="1.6" height="85.7" fill="#e0e0e0" />
<rect x="1254.2" y="1930.2" width="1.6" height="85.7" fill="#e0e0e0" />
<rect x="1603.2" y="1930.2" width="1.6" height="85.7" fill="#e0e0e0" />
<rect x="1873.7" y="1930.2" width="1.6" height="85.7" fill="#e0e0e0" />
<rect x="469.0" y="730.0" width="2.0" height="1286.0" fill="#c0c0c0" />
<text x="411.5" y="795.0" font-size="58" fill="#1d6b3c" text-anchor="middle" stroke="#1d6b3c" stroke-width="0.93" >1</text>
<text x="411.5" y="880.7" font-size="58" fill="#2a2a2a" text-anchor="middle" stroke="#2a2a2a" stroke-width="0.93" >2</text>
<text x="411.5" y="966.5" font-size="58" fill="#2a2a2a" text-anchor="middle" stroke="#2a2a2a" stroke-width="0.93" >3</text>
<text x="411.5" y="1052.2" font-size="58" fill="#2a2a2a" text-anchor="middle" stroke="#2a2a2a" stroke-width="0.93" >4</text>
<text x="411.5" y="1137.9" font-size="58" fill="#2a2a2a" text-anchor="middle" stroke="#2a2a2a" stroke-width="0.93" >5</text>
<text x="411.5" y="1223.7" font-size="58" fill="#2a2a2a" text-anchor="middle" stroke="#2a2a2a" stroke-width="0.93" >6</text>
<text x="411.5" y="1309.4" font-size="58" fill="#2a2a2a" text-anchor="middle" stroke="#2a2a2a" stroke-width="0.93" >7</text>
<text x="411.5" y="1395.1" font-size="58" fill="#2a2a2a" text-anchor="middle" stroke="#2a2a2a" stroke-width="0.93" >8</text>
<text x="411.5" y="1480.8" font-size="58" fill="#2a2a2a" text-anchor="middle" stroke="#2a2a2a" stroke-width="0.93" >9</text>
<text x="411.5" y="1566.6" font-size="58" fill="#2a2a2a" text-anchor="middle" stroke="#2a2a2a" stroke-width="0.93" >10</text>
<text x="411.5" y="1652.3" font-size="58" fill="#2a2a2a" text-anchor="middle" stroke="#2a2a2a" stroke-width="0.93" >11</text>
<text x="411.5" y="1738.0" font-size="58" fill="#2a2a2a" text-anchor="middle" stroke="#2a2a2a" stroke-width="0.93" >12</text>
<text x="411.5" y="1823.8" font-size="58" fill="#2a2a2a" text-anchor="middle" stroke="#2a2a2a" stroke-width="0.93" >13</text>
<text x="411.5" y="1909.5" font-size="58" fill="#2a2a2a" text-anchor="middle" stroke="#2a2a2a" stroke-width="0.93" >14</text>
<text x="411.5" y="1995.2" font-size="58" fill="#2a2a2a" text-anchor="middle" stroke="#2a2a2a" stroke-width="0.93" >15</text>
<text x="484.5" y="795.0" font-size="58" fill="#ffffff" textLength="47.0" lengthAdjust="spacingAndGlyphs" stroke="#ffffff" stroke-width="1.9">Id</text>
<text x="741.0" y="795.0" font-size="58" fill="#ffffff" textLength="137.0" lengthAdjust="spacingAndGlyphs" stroke="#ffffff" stroke-width="1.9">Date</text>
<text x="1265.6" y="795.0" font-size="58" fill="#ffffff" textLength="241.0" lengthAdjust="spacingAndGlyphs" stroke="#ffffff" stroke-width="1.9">Currency</text>
<text x="1615.0" y="795.0" font-size="58" fill="#ffffff" textLength="162.0" lengthAdjust="spacingAndGlyphs" stroke="#ffffff" stroke-width="1.9">Count</text>
<text x="1886.6" y="795.0" font-size="58" fill="#ffffff" textLength="221.4" lengthAdjust="spacingAndGlyphs" stroke="#ffffff" stroke-width="1.9">Amount</text>
<rect x="681" y="768" width="44" height="44" fill="#f3f3f3" stroke="#d0d0d0" stroke-width="1"/>
<path d="M696 790 L710 790 L703 797 Z" fill="#555"/>
<rect x="1207" y="768" width="44" height="44" fill="#f3f3f3" stroke="#d0d0d0" stroke-width="1"/>
<path d="M1222 790 L1236 790 L1229 797 Z" fill="#555"/>
<rect x="1555.4" y="768" width="44" height="44" fill="#f3f3f3" stroke="#d0d0d0" stroke-width="1"/>
<path d="M1570.4 790 L1584.4 790 L1577.4 797 Z" fill="#555"/>
<rect x="1828" y="768" width="44" height="44" fill="#f3f3f3" stroke="#d0d0d0" stroke-width="1"/>
<path d="M1843 790 L1857 790 L1850 797 Z" fill="#555"/>
<rect x="2157" y="768" width="44" height="44" fill="#f3f3f3" stroke="#d0d0d0" stroke-width="1"/>
<path d="M2172 790 L2186 790 L2179 797 Z" fill="#555"/>
<text x="484.5" y="879.2" font-size="57" fill="#1a1a1a" textLength="224.0" lengthAdjust="spacingAndGlyphs" stroke="#1a1a1a" stroke-width="0.9">'000000'</text>
<text x="742.6" y="879.2" font-size="57" fill="#1a1a1a" textLength="499.2" lengthAdjust="spacingAndGlyphs" stroke="#1a1a1a" stroke-width="0.9">16/10/20 20:16:16</text>
<text x="1268.0" y="879.2" font-size="57" fill="#1a1a1a" textLength="117.0" lengthAdjust="spacingAndGlyphs" stroke="#1a1a1a" stroke-width="0.9">UAH</text>
<text x="1862.3" y="879.2" font-size="57" fill="#1a1a1a" text-anchor="end" textLength="65.0" lengthAdjust="spacingAndGlyphs" stroke="#1a1a1a" stroke-width="0.9">10</text>
<text x="2191.0" y="879.2" font-size="57" fill="#1a1a1a" text-anchor="end" textLength="129.0" lengthAdjust="spacingAndGlyphs" stroke="#1a1a1a" stroke-width="0.9">1500</text>
<text x="484.5" y="965.0" font-size="57" fill="#1a1a1a" textLength="224.0" lengthAdjust="spacingAndGlyphs" stroke="#1a1a1a" stroke-width="0.9">'000000'</text>
<text x="742.6" y="965.0" font-size="57" fill="#1a1a1a" textLength="499.2" lengthAdjust="spacingAndGlyphs" stroke="#1a1a1a" stroke-width="0.9">16/10/20 20:16:39</text>
<text x="1268.0" y="965.0" font-size="57" fill="#1a1a1a" textLength="117.0" lengthAdjust="spacingAndGlyphs" stroke="#1a1a1a" stroke-width="0.9">UAH</text>
<text x="1862.3" y="965.0" font-size="57" fill="#1a1a1a" text-anchor="end" textLength="33.0" lengthAdjust="spacingAndGlyphs" stroke="#1a1a1a" stroke-width="0.9">2</text>
<text x="2191.0" y="965.0" font-size="57" fill="#1a1a1a" text-anchor="end" textLength="97.0" lengthAdjust="spacingAndGlyphs" stroke="#1a1a1a" stroke-width="0.9">200</text>
<text x="484.5" y="1050.7" font-size="57" fill="#1a1a1a" textLength="224.0" lengthAdjust="spacingAndGlyphs" stroke="#1a1a1a" stroke-width="0.9">'000000'</text>
<text x="742.6" y="1050.7" font-size="57" fill="#1a1a1a" textLength="499.2" lengthAdjust="spacingAndGlyphs" stroke="#1a1a1a" stroke-width="0.9">16/10/20 20:16:47</text>
<text x="1268.0" y="1050.7" font-size="57" fill="#1a1a1a" textLength="117.0" lengthAdjust="spacingAndGlyphs" stroke="#1a1a1a" stroke-width="0.9">UAH</text>
<text x="1862.3" y="1050.7" font-size="57" fill="#1a1a1a" text-anchor="end" textLength="65.0" lengthAdjust="spacingAndGlyphs" stroke="#1a1a1a" stroke-width="0.9">10</text>
<text x="2191.0" y="1050.7" font-size="57" fill="#1a1a1a" text-anchor="end" textLength="129.0" lengthAdjust="spacingAndGlyphs" stroke="#1a1a1a" stroke-width="0.9">1500</text>
<text x="484.5" y="1136.4" font-size="57" fill="#1a1a1a" textLength="224.0" lengthAdjust="spacingAndGlyphs" stroke="#1a1a1a" stroke-width="0.9">'000000'</text>
<text x="742.6" y="1136.4" font-size="57" fill="#1a1a1a" textLength="499.2" lengthAdjust="spacingAndGlyphs" stroke="#1a1a1a" stroke-width="0.9">16/10/20 20:16:56</text>
<text x="1268.0" y="1136.4" font-size="57" fill="#1a1a1a" textLength="117.0" lengthAdjust="spacingAndGlyphs" stroke="#1a1a1a" stroke-width="0.9">UAH</text>
<text x="1862.3" y="1136.4" font-size="57" fill="#1a1a1a" text-anchor="end" textLength="65.0" lengthAdjust="spacingAndGlyphs" stroke="#1a1a1a" stroke-width="0.9">34</text>
<text x="2191.0" y="1136.4" font-size="57" fill="#1a1a1a" text-anchor="end" textLength="129.0" lengthAdjust="spacingAndGlyphs" stroke="#1a1a1a" stroke-width="0.9">3900</text>
<text x="484.5" y="1222.2" font-size="57" fill="#1a1a1a" textLength="224.0" lengthAdjust="spacingAndGlyphs" stroke="#1a1a1a" stroke-width="0.9">'000000'</text>
<text x="742.6" y="1222.2" font-size="57" fill="#1a1a1a" textLength="499.2" lengthAdjust="spacingAndGlyphs" stroke="#1a1a1a" stroke-width="0.9">16/10/20 20:16:57</text>
<text x="1268.0" y="1222.2" font-size="57" fill="#1a1a1a" textLength="117.0" lengthAdjust="spacingAndGlyphs" stroke="#1a1a1a" stroke-width="0.9">UAH</text>
<text x="1862.3" y="1222.2" font-size="57" fill="#1a1a1a" text-anchor="end" textLength="65.0" lengthAdjust="spacingAndGlyphs" stroke="#1a1a1a" stroke-width="0.9">10</text>
<text x="2191.0" y="1222.2" font-size="57" fill="#1a1a1a" text-anchor="end" textLength="129.0" lengthAdjust="spacingAndGlyphs" stroke="#1a1a1a" stroke-width="0.9">1500</text>
<text x="484.5" y="1307.9" font-size="57" fill="#1a1a1a" textLength="224.0" lengthAdjust="spacingAndGlyphs" stroke="#1a1a1a" stroke-width="0.9">'000000'</text>
<text x="742.6" y="1307.9" font-size="57" fill="#1a1a1a" textLength="499.2" lengthAdjust="spacingAndGlyphs" stroke="#1a1a1a" stroke-width="0.9">19/10/20 18:13:31</text>
<text x="1268.0" y="1307.9" font-size="57" fill="#1a1a1a" textLength="117.0" lengthAdjust="spacingAndGlyphs" stroke="#1a1a1a" stroke-width="0.9">UAH</text>
<text x="1862.3" y="1307.9" font-size="57" fill="#1a1a1a" text-anchor="end" textLength="33.0" lengthAdjust="spacingAndGlyphs" stroke="#1a1a1a" stroke-width="0.9">2</text>
<text x="2191.0" y="1307.9" font-size="57" fill="#1a1a1a" text-anchor="end" textLength="97.0" lengthAdjust="spacingAndGlyphs" stroke="#1a1a1a" stroke-width="0.9">200</text>
<text x="484.5" y="1393.6" font-size="57" fill="#1a1a1a" textLength="224.0" lengthAdjust="spacingAndGlyphs" stroke="#1a1a1a" stroke-width="0.9">'000000'</text>
<text x="742.6" y="1393.6" font-size="57" fill="#1a1a1a" textLength="499.2" lengthAdjust="spacingAndGlyphs" stroke="#1a1a1a" stroke-width="0.9">19/10/20 18:14:54</text>
<text x="1268.0" y="1393.6" font-size="57" fill="#1a1a1a" textLength="117.0" lengthAdjust="spacingAndGlyphs" stroke="#1a1a1a" stroke-width="0.9">UAH</text>
<text x="1862.3" y="1393.6" font-size="57" fill="#1a1a1a" text-anchor="end" textLength="65.0" lengthAdjust="spacingAndGlyphs" stroke="#1a1a1a" stroke-width="0.9">34</text>
<text x="2191.0" y="1393.6" font-size="57" fill="#1a1a1a" text-anchor="end" textLength="129.0" lengthAdjust="spacingAndGlyphs" stroke="#1a1a1a" stroke-width="0.9">3900</text>
<text x="484.5" y="1479.3" font-size="57" fill="#1a1a1a" textLength="224.0" lengthAdjust="spacingAndGlyphs" stroke="#1a1a1a" stroke-width="0.9">'000000'</text>
<text x="742.6" y="1479.3" font-size="57" fill="#1a1a1a" textLength="499.2" lengthAdjust="spacingAndGlyphs" stroke="#1a1a1a" stroke-width="0.9">19/10/20 20:17:24</text>
<text x="1268.0" y="1479.3" font-size="57" fill="#1a1a1a" textLength="117.0" lengthAdjust="spacingAndGlyphs" stroke="#1a1a1a" stroke-width="0.9">UAH</text>
<text x="1862.3" y="1479.3" font-size="57" fill="#1a1a1a" text-anchor="end" textLength="65.0" lengthAdjust="spacingAndGlyphs" stroke="#1a1a1a" stroke-width="0.9">10</text>
<text x="2191.0" y="1479.3" font-size="57" fill="#1a1a1a" text-anchor="end" textLength="129.0" lengthAdjust="spacingAndGlyphs" stroke="#1a1a1a" stroke-width="0.9">1500</text>
<text x="484.5" y="1565.1" font-size="57" fill="#1a1a1a" textLength="224.0" lengthAdjust="spacingAndGlyphs" stroke="#1a1a1a" stroke-width="0.9">'000000'</text>
<text x="742.6" y="1565.1" font-size="57" fill="#1a1a1a" textLength="499.2" lengthAdjust="spacingAndGlyphs" stroke="#1a1a1a" stroke-width="0.9">20/10/20 12:55:48</text>
<text x="1268.0" y="1565.1" font-size="57" fill="#1a1a1a" textLength="117.0" lengthAdjust="spacingAndGlyphs" stroke="#1a1a1a" stroke-width="0.9">UAH</text>
<text x="1862.3" y="1565.1" font-size="57" fill="#1a1a1a" text-anchor="end" textLength="65.0" lengthAdjust="spacingAndGlyphs" stroke="#1a1a1a" stroke-width="0.9">34</text>
<text x="2191.0" y="1565.1" font-size="57" fill="#1a1a1a" text-anchor="end" textLength="129.0" lengthAdjust="spacingAndGlyphs" stroke="#1a1a1a" stroke-width="0.9">3900</text>
<text x="484.5" y="1650.8" font-size="57" fill="#1a1a1a" textLength="224.0" lengthAdjust="spacingAndGlyphs" stroke="#1a1a1a" stroke-width="0.9">'000000'</text>
<text x="742.6" y="1650.8" font-size="57" fill="#1a1a1a" textLength="499.2" lengthAdjust="spacingAndGlyphs" stroke="#1a1a1a" stroke-width="0.9">20/10/20 13:44:47</text>
<text x="1268.0" y="1650.8" font-size="57" fill="#1a1a1a" textLength="117.0" lengthAdjust="spacingAndGlyphs" stroke="#1a1a1a" stroke-width="0.9">UAH</text>
<text x="1862.3" y="1650.8" font-size="57" fill="#1a1a1a" text-anchor="end" textLength="65.0" lengthAdjust="spacingAndGlyphs" stroke="#1a1a1a" stroke-width="0.9">34</text>
<text x="2191.0" y="1650.8" font-size="57" fill="#1a1a1a" text-anchor="end" textLength="129.0" lengthAdjust="spacingAndGlyphs" stroke="#1a1a1a" stroke-width="0.9">3900</text>
<text x="484.5" y="1736.5" font-size="57" fill="#1a1a1a" textLength="224.0" lengthAdjust="spacingAndGlyphs" stroke="#1a1a1a" stroke-width="0.9">'000000'</text>
<text x="742.6" y="1736.5" font-size="57" fill="#1a1a1a" textLength="499.2" lengthAdjust="spacingAndGlyphs" stroke="#1a1a1a" stroke-width="0.9">20/10/20 13:45:44</text>
<text x="1268.0" y="1736.5" font-size="57" fill="#1a1a1a" textLength="117.0" lengthAdjust="spacingAndGlyphs" stroke="#1a1a1a" stroke-width="0.9">UAH</text>
<text x="1862.3" y="1736.5" font-size="57" fill="#1a1a1a" text-anchor="end" textLength="33.0" lengthAdjust="spacingAndGlyphs" stroke="#1a1a1a" stroke-width="0.9">2</text>
<text x="2191.0" y="1736.5" font-size="57" fill="#1a1a1a" text-anchor="end" textLength="97.0" lengthAdjust="spacingAndGlyphs" stroke="#1a1a1a" stroke-width="0.9">200</text>
<text x="484.5" y="1822.3" font-size="57" fill="#1a1a1a" textLength="224.0" lengthAdjust="spacingAndGlyphs" stroke="#1a1a1a" stroke-width="0.9">'000000'</text>
<text x="742.6" y="1822.3" font-size="57" fill="#1a1a1a" textLength="499.2" lengthAdjust="spacingAndGlyphs" stroke="#1a1a1a" stroke-width="0.9">22/10/20 15:00:53</text>
<text x="1268.0" y="1822.3" font-size="57" fill="#1a1a1a" textLength="117.0" lengthAdjust="spacingAndGlyphs" stroke="#1a1a1a" stroke-width="0.9">UAH</text>
<text x="1862.3" y="1822.3" font-size="57" fill="#1a1a1a" text-anchor="end" textLength="33.0" lengthAdjust="spacingAndGlyphs" stroke="#1a1a1a" stroke-width="0.9">1</text>
<text x="2191.0" y="1822.3" font-size="57" fill="#1a1a1a" text-anchor="end" textLength="65.0" lengthAdjust="spacingAndGlyphs" stroke="#1a1a1a" stroke-width="0.9">20</text>
<text x="484.5" y="1908.0" font-size="57" fill="#1a1a1a" textLength="224.0" lengthAdjust="spacingAndGlyphs" stroke="#1a1a1a" stroke-width="0.9">'000000'</text>
<text x="742.6" y="1908.0" font-size="57" fill="#1a1a1a" textLength="499.2" lengthAdjust="spacingAndGlyphs" stroke="#1a1a1a" stroke-width="0.9">22/10/20 15:01:52</text>
<text x="1268.0" y="1908.0" font-size="57" fill="#1a1a1a" textLength="117.0" lengthAdjust="spacingAndGlyphs" stroke="#1a1a1a" stroke-width="0.9">UAH</text>
<text x="1862.3" y="1908.0" font-size="57" fill="#1a1a1a" text-anchor="end" textLength="33.0" lengthAdjust="spacingAndGlyphs" stroke="#1a1a1a" stroke-width="0.9">2</text>
<text x="2191.0" y="1908.0" font-size="57" fill="#1a1a1a" text-anchor="end" textLength="65.0" lengthAdjust="spacingAndGlyphs" stroke="#1a1a1a" stroke-width="0.9">40</text>
<text x="484.5" y="1993.7" font-size="57" fill="#1a1a1a" textLength="224.0" lengthAdjust="spacingAndGlyphs" stroke="#1a1a1a" stroke-width="0.9">'000000'</text>
<text x="742.6" y="1993.7" font-size="57" fill="#1a1a1a" textLength="499.2" lengthAdjust="spacingAndGlyphs" stroke="#1a1a1a" stroke-width="0.9">22/10/20 15:02:09</text>
<text x="1268.0" y="1993.7" font-size="57" fill="#1a1a1a" textLength="117.0" lengthAdjust="spacingAndGlyphs" stroke="#1a1a1a" stroke-width="0.9">UAH</text>
<text x="1862.3" y="1993.7" font-size="57" fill="#1a1a1a" text-anchor="end" textLength="33.0" lengthAdjust="spacingAndGlyphs" stroke="#1a1a1a" stroke-width="0.9">3</text>
<text x="2191.0" y="1993.7" font-size="57" fill="#1a1a1a" text-anchor="end" textLength="65.0" lengthAdjust="spacingAndGlyphs" stroke="#1a1a1a" stroke-width="0.9">60</text>
<rect x="471" y="731.5" width="256" height="83" fill="none" stroke="#217346" stroke-width="4"/>
<rect x="722.0" y="810.0" width="11.0" height="11.0" fill="#217346" />
</g></g>
<path d="M1808 44 L2161 44 L2161 96 Q2161 102 2155 102 L1814 102 Q1808 102 1808 96 Z" fill="#000"/>
<circle cx="1984" cy="65" r="13" fill="#2a2a2a"/>
<circle cx="1984" cy="65" r="5" fill="#333"/>
</svg>
</body></html>
